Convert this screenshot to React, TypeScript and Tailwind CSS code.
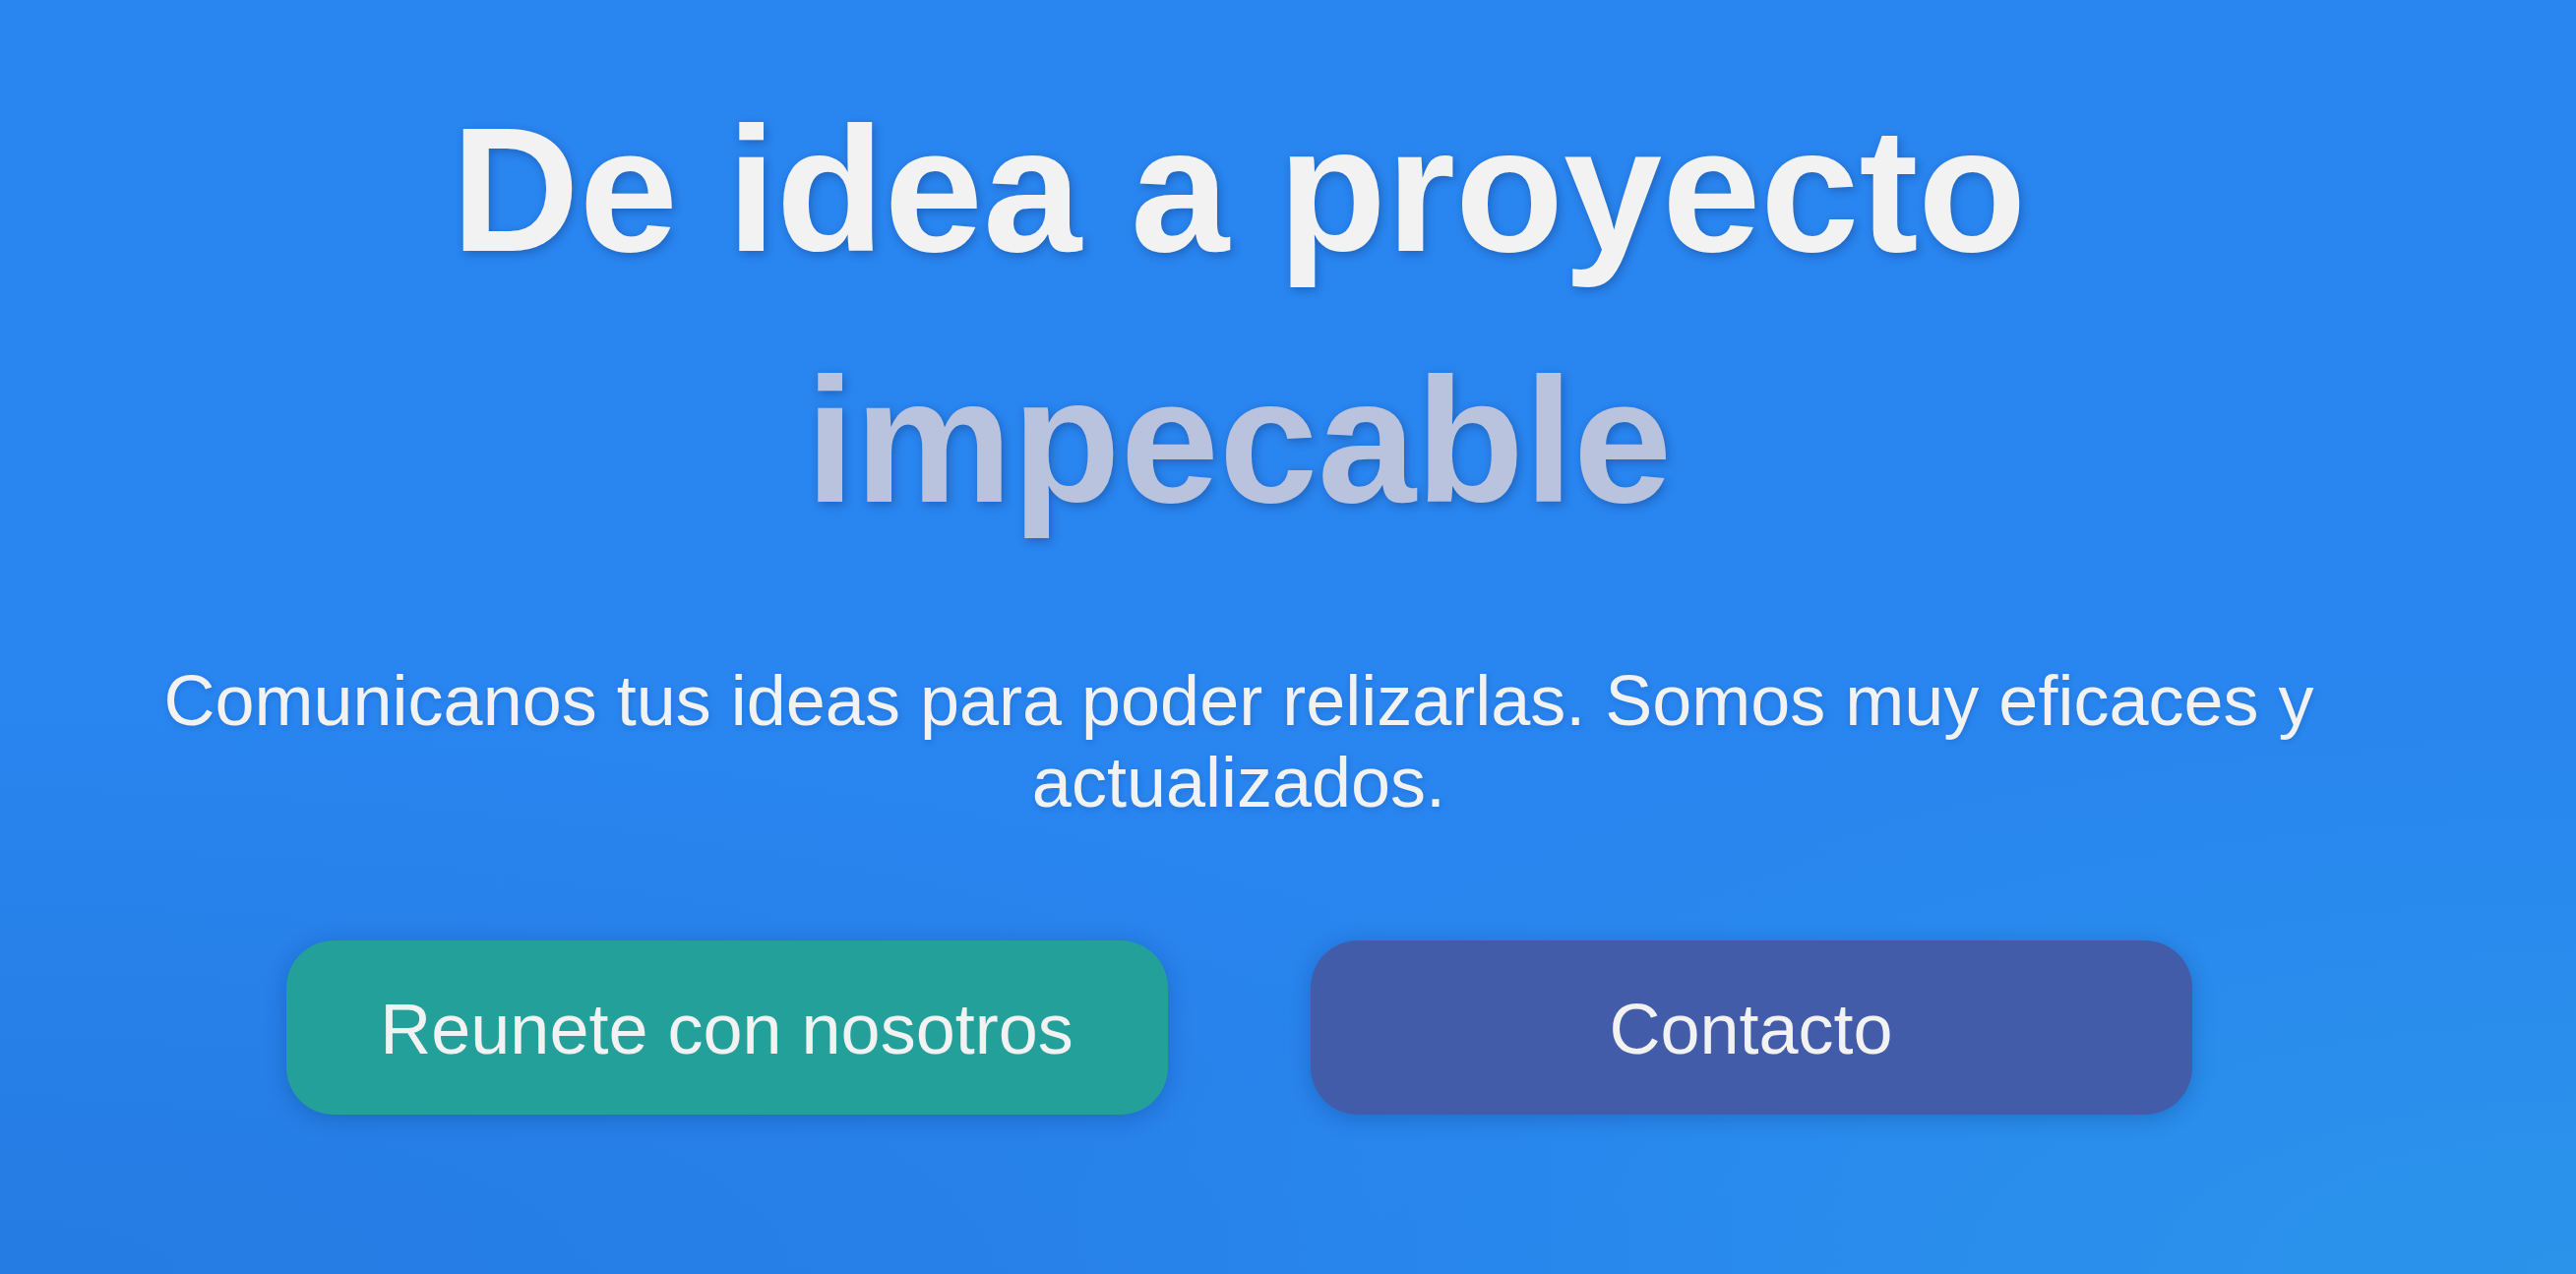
export default function App() {
  return (
    <div
      className="relative h-[1295px] w-full overflow-hidden bg-[radial-gradient(ellipse_70%_45%_at_0%_100%,rgba(30,110,200,0.35),transparent),radial-gradient(ellipse_60%_50%_at_100%_100%,rgba(45,160,230,0.55),transparent),linear-gradient(180deg,#2985f0_0%,#2884ef_100%)]"
      style={{ fontFamily: '"Liberation Sans", Arial, Helvetica, sans-serif' }}
    >
      <div className="flex flex-col items-center pr-[100px] pt-[65px] text-center">
        <h1 className="text-[180px] font-bold leading-[255px] text-[#f2f2f2] [text-shadow:2px_3px_10px_rgba(0,0,40,0.25)]">
          De idea a proyecto
          <br />
          <span className="text-[#bac3de]">impecable</span>
        </h1>
        <p className="mt-[96px] text-[72px] leading-[82.7px] text-[#f2f2f2] [text-shadow:1px_2px_6px_rgba(0,0,40,0.12)]">
          Comunicanos tus ideas para poder relizarlas. Somos muy eficaces y actualizados.
        </p>
        <div className="mt-[120px] flex gap-[145px]">
          <button className="flex h-[177px] w-[896px] items-center justify-center rounded-[48px] bg-[#22a099] pt-[3px] text-[72px] leading-[82.7px] text-[#f2f2f2] shadow-[0_4px_22px_rgba(0,20,80,0.22)]">
            Reunete con nosotros
          </button>
          <button className="flex h-[177px] w-[896px] items-center justify-center rounded-[48px] bg-[#435ca9] pt-[3px] text-[72px] leading-[82.7px] text-[#f2f2f2] shadow-[0_4px_22px_rgba(0,20,80,0.22)]">
            Contacto
          </button>
        </div>
      </div>
    </div>
  );
}
